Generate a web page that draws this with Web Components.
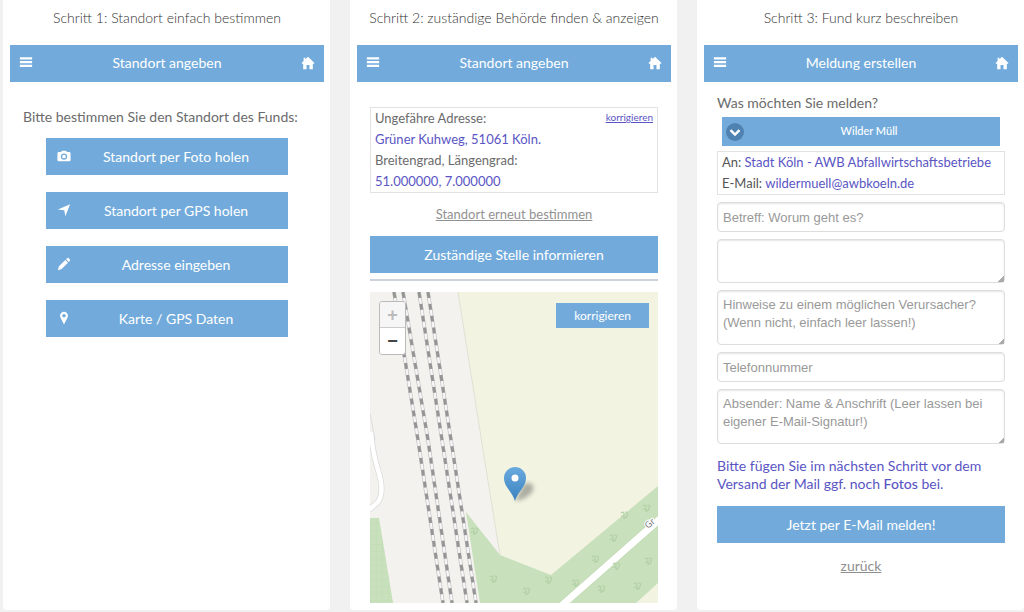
<!DOCTYPE html>
<html lang="de">
<head>
<meta charset="utf-8">
<meta name="viewport" content="width=device-width, initial-scale=1">
<title>Fund melden in drei Schritten</title>
<style>
  body {
    margin: 0;
    background: #f1f1f1;
    color: #6b6b6b;
    font: 14px/21px Lato, "Open Sans", sans-serif;
    --blue: #72abdb;
    --link: #5a55c4;
    --line: #e2e2e2;
  }
</style>
</head>
<body>
<melde-app></melde-app>
<script>
const define = (name, html, setup) => {
  const template = document.createElement('template');
  template.innerHTML = html;
  customElements.define(name, class extends HTMLElement {
    constructor() {
      super();
      this.attachShadow({ mode: 'open' }).append(template.content.cloneNode(true));
    }
    connectedCallback() { if (setup) setup(this, this.shadowRoot); }
  });
};

const ICONS = {
  menu: '<path d="M1 1.500h14v2.400H1zM1 5.800h14v2.400H1zM1 10.100h14v2.400H1z"/>',
  home: '<path d="M8 .8 15.4 8l-1.1 1.2-.8-.7V15H9.7v-4.6H6.3V15H2.5V8.5l-.8.7L.6 8 3 5.600V2h2v1.700z"/>',
  camera: '<path fill-rule="evenodd" d="M2 3.500h2.600L5.800 2h4.400l1.200 1.500H14a1.500 1.500 0 0 1 1.500 1.500v7.500A1.500 1.500 0 0 1 14 14H2a1.500 1.500 0 0 1-1.500-1.500V5A1.500 1.500 0 0 1 2 3.500zM8 5a3.600 3.600 0 1 0 0 7.200A3.600 3.600 0 0 0 8 5zm0 1.500a2.100 2.100 0 1 1 0 4.200 2.100 2.100 0 0 1 0-4.200z"/>',
  arrow: '<path d="M15 1.500 9.500 15 8.300 8.200 1 7.500z"/>',
  pencil: '<path d="m1 15 1.200-4.300 7.300-7.300 3.100 3.100-7.300 7.300zM10.400 2.500l1-1a1.500 1.500 0 0 1 2.100 0l1 1a1.500 1.500 0 0 1 0 2.100l-1 1z"/>',
  pin: '<path fill-rule="evenodd" d="M8 .8a4.500 4.500 0 0 1 4.500 4.600C12.500 8 10 11 8 15.500 6 11 3.500 8 3.500 5.400A4.500 4.500 0 0 1 8 .8zm0 2.500a2 2 0 1 0 0 4 2 2 0 0 0 0-4z"/>',
  chevron: '<circle cx="8" cy="8" r="8" fill="#4f82b0"/><path d="m4 6.300 4 4 4-4" fill="none" stroke="#fff" stroke-width="2.200"/>'
};

define('ui-icon', `
  <style>
    :host { display: inline-flex; width: 14px; height: 14px; }
    svg { width: 100%; height: 100%; fill: currentColor; }
  </style>
  <svg viewBox="0 0 16 16" aria-hidden="true"></svg>`,
  (host, root) => { root.querySelector('svg').innerHTML = ICONS[host.getAttribute('name')]; });

define('blue-button', `
  <style>
    :host { display: block; }
    button {
      display: grid; grid-template-columns: 14px 1fr; align-items: center; box-sizing: border-box;
      width: 100%; min-height: 37px; padding: 0 11px 1px; border: 0; margin: 0;
      background: var(--blue); color: #fff; font: inherit; cursor: pointer;
    }
    span { grid-column: 1 / -1; text-align: center; }
    ui-icon + span { grid-column: 2; padding-left: 4px; }
    :host([compact]) button { min-height: 25px; font-size: 12px; line-height: 21px; padding: 0 18px; }
  </style>
  <button type="button"><span><slot></slot></span></button>`,
  (host, root) => {
    const name = host.getAttribute('icon');
    if (!name) return;
    const icon = document.createElement('ui-icon');
    icon.setAttribute('name', name);
    root.querySelector('button').prepend(icon);
  });

define('app-bar', `
  <style>
    :host { display: block; background: var(--blue); color: #fff; }
    header { display: grid; grid-template-columns: auto 1fr auto; align-items: center; box-sizing: border-box; min-height: 37px; padding: 0 9px 2px; }
    h2 { margin: 0; font: inherit; text-align: center; }
    button, a { display: inline-flex; padding: 0; border: 0; background: none; color: inherit; }
  </style>
  <header>
    <button type="button" aria-label="Menü"><ui-icon name="menu"></ui-icon></button>
    <h2><slot></slot></h2>
    <a href="#start" aria-label="Startseite"><ui-icon name="home"></ui-icon></a>
  </header>`);

define('step-card', `
  <style>
    :host { display: block; box-sizing: border-box; padding: 7px 6px 7px 7px; background: #fff; border-radius: 0 0 4px 4px; }
    h1 { margin: 0 0 17px; font-size: 14px; line-height: 21px; font-weight: 300; color: #333; text-align: center; }
    .body { padding: 0 13px; }
  </style>
  <h1><slot name="title"></slot></h1>
  <app-bar><slot name="bar"></slot></app-bar>
  <div class="body"><slot></slot></div>`);

define('locate-step', `
  <style>
    :host { display: block; padding-top: 24px; }
    p { margin: 0 0 11px; white-space: nowrap; }
    nav { display: grid; gap: 17px; padding: 0 23px; }
  </style>
  <p>Bitte bestimmen Sie den Standort des Funds:</p>
  <nav>
    <blue-button icon="camera">Standort per Foto holen</blue-button>
    <blue-button icon="arrow">Standort per GPS holen</blue-button>
    <blue-button icon="pencil">Adresse eingeben</blue-button>
    <blue-button icon="pin">Karte / GPS Daten</blue-button>
  </nav>`);

define('location-map', `
  <style>
    :host { display: block; position: relative; overflow: hidden; }
    svg { display: block; width: 100%; height: 311px; }
    .zoom { position: absolute; top: 9px; left: 9px; display: grid; border: 1px solid #bbb; border-radius: 3px; overflow: hidden; }
    .zoom button {
      width: 25px; height: 26px; padding: 0; border: 0; background: #fff; color: #444;
      font: bold 18px/24px "Liberation Sans", sans-serif;
    }
    .zoom button:disabled { background: #f6f6f6; color: #bbb; border-bottom: 1px solid #ccc; }
    blue-button { position: absolute; top: 11px; right: 9px; }
  </style>
  <svg viewBox="0 0 288 311" preserveAspectRatio="xMidYMid slice" role="img" aria-label="Karte">
    <defs>
      <linearGradient id="pin" x1="0" y1="0" x2="0" y2="1"><stop offset="0" stop-color="#6aaade"/><stop offset="1" stop-color="#3b82bf"/></linearGradient>
      <filter id="soft" x="-50%" y="-50%" width="200%" height="200%"><feGaussianBlur stdDeviation="2"/></filter>
      <pattern id="plots" width="6" height="7" patternUnits="userSpaceOnUse"><path d="M0 0H6M0 0V7" stroke="#bcd9b0" stroke-width=".7"/></pattern>
      <g id="bush" fill="none" stroke="#b3d0a7" stroke-width="1.200"><path d="M-3-2q3-2 3 1t-3 2M1-3q4 0 2 3M0 4V0M0 3q3 0 3-3"/></g>
    </defs>
    <path fill="#f3f2ee" d="M0 0H288V311H0z"/>
    <path fill="#f2f3e0" d="M88 0H288V311H250L181 283 130 263 113 158z"/>
    <path fill="none" stroke="#e0e1d5" d="M88 0 113 158 130 263"/>
    <path fill="#c8e0bb" d="M96 220 130 263 181 283 288 194V291L266 311H110z"/>
    <path fill="#c8e0bb" d="M0 226H9L23 311H0z"/>
    <path fill="url(#plots)" d="M0 226H9L23 311H0z"/>
    <g fill="none">
      <path stroke="#ddd" d="M0 121 5 148"/>
      <path stroke="#dadada" stroke-width="6" d="M1 140Q2 158 8 178 15 200 8 210L-1 218"/>
      <path stroke="#fff" stroke-width="4.500" d="M1 140Q2 158 8 178 15 200 8 210L-1 218"/>
      <path stroke="#bbd2ae" stroke-width="8" d="M190 315 290 227"/>
      <path stroke="#fff" stroke-width="7" d="M190 315 290 227"/>
    </g>
    <g id="rails"></g>
    <use href="#bush" x="104" y="239"/><use href="#bush" x="123" y="287"/><use href="#bush" x="156" y="299"/>
    <use href="#bush" x="178" y="288"/><use href="#bush" x="205" y="291"/><use href="#bush" x="225" y="267"/>
    <use href="#bush" x="231" y="297"/><use href="#bush" x="246" y="274"/><use href="#bush" x="243" y="246"/>
    <use href="#bush" x="276" y="216"/><use href="#bush" x="267" y="294"/><use href="#bush" x="278" y="269"/>
    <use href="#bush" x="254" y="223"/>
    <text x="278" y="237" transform="rotate(-41 278 237)" fill="#777" stroke="#fff" stroke-width="2" paint-order="stroke" font-family="Noto Sans, sans-serif" font-size="9">Gr</text>
    <path d="M145 209 154 192Q165 188 163 199 156 208 145 209z" fill="#444" opacity=".4" filter="url(#soft)"/>
    <path fill="url(#pin)" d="M145 209C142 199 134 195 134 186A11 11 0 0 1 156 186C156 195 148 199 145 209z"/>
    <circle cx="145" cy="186" r="3.500" fill="#fff"/>
  </svg>
  <div class="zoom">
    <button type="button" aria-label="Vergrößern" disabled>+</button>
    <button type="button" aria-label="Verkleinern">−</button>
  </div>
  <blue-button compact>korrigieren</blue-button>`,
  (host, root) => {
    const tracks = ['M24 0 48 148 73 311', 'M33 0 58 148 82 311', 'M49 0 72 148 97 311', 'M58 0 81 148 106 311'];
    root.getElementById('rails').innerHTML = tracks.map(d => `
      <g fill="none"><path d="${d}" stroke="#bcbcbc" stroke-width="3.600"/>
      <path d="${d}" stroke="#f6f6f6" stroke-width="2.400"/>
      <path d="${d}" stroke="#959595" stroke-width="3" stroke-dasharray="6 6"/></g>`).join('');
  });

define('address-step', `
  <style>
    :host { display: block; padding-top: 25px; }
    .box { display: grid; grid-template-columns: 1fr auto; padding: 0 4px; border: 1px solid var(--line); font-size: 13px; }
    dl, dd { margin: 0; }
    dd { color: var(--link); }
    .box a { color: var(--link); font-size: 10px; line-height: 18px; }
    .again { margin: 0; padding: 11px 0; text-align: center; font-size: 13px; }
    .again a { color: #929292; }
    hr { height: 2px; margin: 6px 0 11px; border: 0; background: #cdd3d8; }
  </style>
  <div class="box">
    <dl>
      <dt>Ungefähre Adresse:</dt><dd>Grüner Kuhweg, 51061 Köln.</dd>
      <dt>Breitengrad, Längengrad:</dt><dd>51.000000, 7.000000</dd>
    </dl>
    <a href="#adresse">korrigieren</a>
  </div>
  <p class="again"><a href="#standort">Standort erneut bestimmen</a></p>
  <blue-button>Zuständige Stelle informieren</blue-button>
  <hr>
  <location-map></location-map>`);

define('report-step', `
  <style>
    :host { display: block; padding-top: 10px; }
    form { display: grid; gap: 7px; }
    .kind { display: grid; }
    .select { display: grid; grid-template-columns: 26px 1fr; align-items: center; margin: 4px 5px 5px; background: var(--blue); }
    .select ui-icon { grid-area: 1 / 1; width: 18px; height: 18px; margin-left: 4px; pointer-events: none; z-index: 1; }
    select {
      grid-area: 1 / 1 / 2 / 3; height: 29px; padding: 0 0 2px 16px; border: 0; appearance: none; background: none;
      color: #fff; font: 500 11px/21px Lato, sans-serif; text-align: center; text-align-last: center;
    }
    .to { border: 1px solid var(--line); padding: 0 4px; font-size: 13px; color: #555; }
    .to p { margin: 0; }
    .to a, .to span { color: var(--link); text-decoration: none; }
    .kind + .to { margin-top: -7px; }
    input, textarea {
      display: block; box-sizing: border-box; width: 100%; margin: 0; padding: 5px; border: 1px solid #ddd; border-radius: 4px;
      box-shadow: inset 0 1px 2px #e6e6e6; background: #fff; color: #555;
      font: 13px/18px "Liberation Sans", sans-serif;
    }
    input { height: 30px; }
    textarea { height: 55px; overflow: hidden; }
    textarea.short { height: 44px; }
    ::-webkit-resizer { background: linear-gradient(135deg, transparent 80%, #aaa 80%); }
    ::placeholder { color: #999; opacity: 1; }
    .hint { margin: 6px 0; line-height: 18px; color: var(--link); }
    .hint b { font-weight: 500; }
    .back { margin: 5px 0 0; text-align: center; }
    .back a { color: #8f8f8f; }
  </style>
  <form>
    <div class="kind">
      <label for="kind">Was möchten Sie melden?</label>
      <div class="select">
        <ui-icon name="chevron"></ui-icon>
        <select id="kind"><option>Wilder Müll</option></select>
      </div>
    </div>
    <div class="to">
      <p>An: <span>Stadt Köln - AWB Abfallwirtschaftsbetriebe</span></p>
      <p>E-Mail: <a href="mailto:wildermuell@awbkoeln.de">wildermuell@awbkoeln.de</a></p>
    </div>
    <input type="text" aria-label="Betreff" placeholder="Betreff: Worum geht es?">
    <textarea class="short" aria-label="Beschreibung"></textarea>
    <textarea aria-label="Hinweise" placeholder="Hinweise zu einem möglichen Verursacher? (Wenn nicht, einfach leer lassen!)"></textarea>
    <input type="tel" aria-label="Telefonnummer" placeholder="Telefonnummer">
    <textarea aria-label="Absender" placeholder="Absender: Name &amp; Anschrift (Leer lassen bei eigener E-Mail-Signatur!)"></textarea>
    <p class="hint">Bitte fügen Sie im nächsten Schritt vor dem Versand der Mail ggf. noch <b>Fotos</b> bei.</p>
    <blue-button>Jetzt per E-Mail melden!</blue-button>
    <p class="back"><a href="#zurueck">zurück</a></p>
  </form>`);

define('melde-app', `
  <style>
    :host { display: block; }
    main { display: grid; grid-template-columns: repeat(3, minmax(0, 1fr)); gap: 20px; padding: 0 0 1px 3px; }
  </style>
  <main>
    <step-card><span slot="title">Schritt 1: Standort einfach bestimmen</span><span slot="bar">Standort angeben</span><locate-step></locate-step></step-card>
    <step-card><span slot="title">Schritt 2: zuständige Behörde finden &amp; anzeigen</span><span slot="bar">Standort angeben</span><address-step></address-step></step-card>
    <step-card><span slot="title">Schritt 3: Fund kurz beschreiben</span><span slot="bar">Meldung erstellen</span><report-step></report-step></step-card>
  </main>`);
</script>
</body>
</html>
